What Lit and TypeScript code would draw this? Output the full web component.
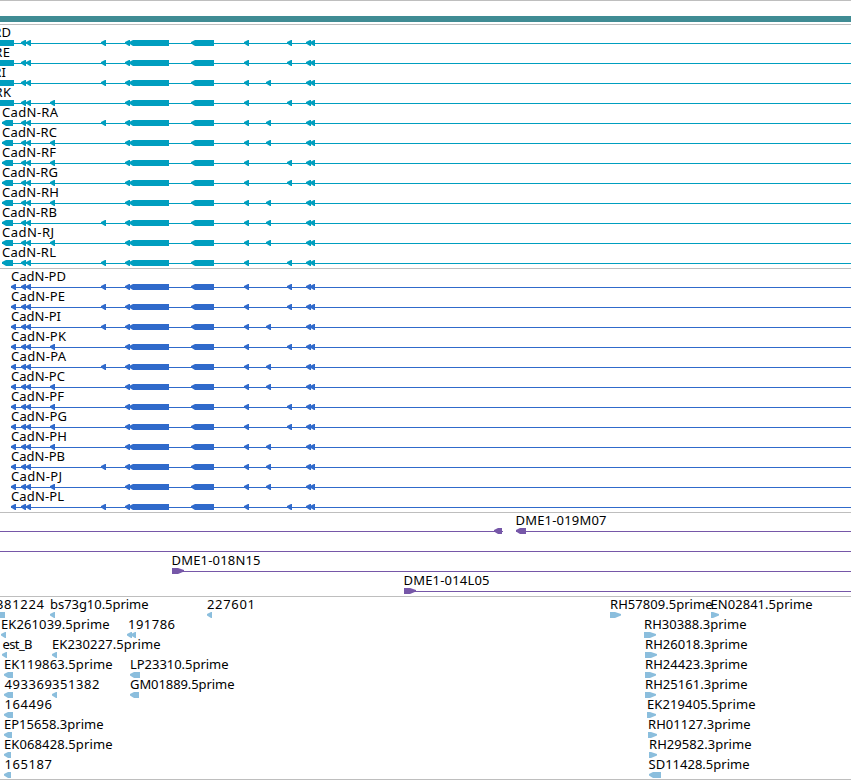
// import stuff
import { LitElement, html, svg, css } from 'lit';
import { customElement, property } from 'lit/decorators.js';

// text, start x, drawn length
type Label = [string, number, number];
// start x, end x, direction
type Part = [number, number, string];
// start x, end x
type Line = [number, number];

interface Row {
  labels: Label[];
  parts: Part[];
  lines: Line[];
}

const EDGE = 851;

const left = (a: number, b: number): Part => [a, b, 'left'];
const right = (a: number, b: number): Part => [a, b, 'right'];

// exons shared by every CadN isoform, the flags pick the alternative ones
function exons(first: Part, alt: number, last: number): Part[] {
  return [
    first,
    left(21, 26),
    left(26, 31),
    left(alt, alt + 5),
    left(125, 130),
    left(129, 169),
    left(191, 214),
    left(244, 249),
    left(last, last + 5),
    left(306, 311),
    left(310, 315),
  ];
}

// isoform letter, alternative exons, label lengths for transcript and protein
const isoforms: [string, number, number, number, number][] = [
  ['D', 101, 287, 56, 55],
  ['E', 101, 287, 55, 54],
  ['I', 101, 266, 51, 50],
  ['K', 50, 287, 56, 55],
  ['A', 101, 266, 56, 55],
  ['C', 50, 266, 55, 54],
  ['F', 50, 287, 54, 53],
  ['G', 50, 287, 56, 56],
  ['H', 50, 266, 57, 56],
  ['B', 101, 266, 55, 54],
  ['J', 50, 266, 52, 51],
  ['L', 101, 287, 54, 53],
];

const transcripts: Row[] = isoforms.map(([name, alt, last, width], i) => ({
  labels: [[`CadN-R${name}`, i < 4 ? -45.5 : 1.5, width]],
  parts: exons(i < 4 ? [0, 14, 'none'] : left(2, 13), alt, last),
  lines: [[i < 4 ? 0 : 2, EDGE]],
}));

const proteins: Row[] = isoforms.map(([name, alt, last, , width]) => ({
  labels: [[`CadN-P${name}`, 10.5, width]],
  parts: exons(left(11, 16), alt, last),
  lines: [[11, EDGE]],
}));

const clones: Row[] = [
  {
    labels: [['DME1-019M07', 515, 91]],
    parts: [left(494, 502), left(516, 526)],
    lines: [[0, 503], [516, EDGE]],
  },
  { labels: [], parts: [], lines: [[0, EDGE]] },
  { labels: [['DME1-018N15', 171, 89]], parts: [right(172, 184)], lines: [[172, EDGE]] },
  { labels: [['DME1-014L05', 403, 86]], parts: [right(404, 416)], lines: [[404, EDGE]] },
];

const est = (labels: Label[], parts: Part[]): Row => ({ labels, parts, lines: [] });

const ests: Row[] = [
  est(
    [['381224', -4.5, 48], ['bs73g10.5prime', 49.5, 98.5], ['227601', 206.5, 48], ['RH57809.5prime', 609.5, 102.5], ['EN02841.5prime', 710, 102]],
    [[0, 5, 'none'], left(50, 55), left(207, 212), right(610, 621), right(711, 719)],
  ),
  est(
    [['EK261039.5prime', 0.5, 108.5], ['191786', 127.5, 47], ['RH30388.3prime', 643.5, 102.5]],
    [left(1, 6), left(127, 132), left(131, 136), right(644, 656)],
  ),
  est(
    [['est_B', 2, 30], ['EK230227.5prime', 51.5, 108.5], ['RH26018.3prime', 644.5, 102.5]],
    [left(2, 7), left(52, 57), right(645, 657)],
  ),
  est(
    [['EK119863.5prime', 3.5, 108.5], ['LP23310.5prime', 129.5, 98.5], ['RH24423.3prime', 644.5, 102.5]],
    [left(4, 13), left(130, 140), right(645, 656)],
  ),
  est(
    [['493369', 4, 47.5], ['351382', 51.5, 47.5], ['GM01889.5prime', 129.5, 104.5], ['RH25161.3prime', 644.5, 102.5]],
    [left(4, 13), left(52, 57), left(130, 139), right(645, 656)],
  ),
  est(
    [['164496', 4, 47.5], ['EK219405.5prime', 646.5, 108.5]],
    [left(4, 13), right(647, 656)],
  ),
  est(
    [['EP15658.3prime', 3.5, 99.5], ['RH01127.3prime', 647.5, 102.5]],
    [left(4, 12), right(648, 657)],
  ),
  est(
    [['EK068428.5prime', 3.5, 108.5], ['RH29582.3prime', 648.5, 102.5]],
    [left(4, 11), right(649, 657)],
  ),
  est(
    [['165187', 4, 47.5], ['SD11428.5prime', 648, 101]],
    [left(4, 11), left(649, 661)],
  ),
];

@customElement('map-row')
export class MapRow extends LitElement {
  @property({ attribute: false }) row: Row = { labels: [], parts: [], lines: [] };

  static styles = css`
    :host {
      display: block;
      height: 20px;
    }

    svg {
      display: block;
      width: 851px;
      height: 20px;
      overflow: visible;
    }

    text {
      font: 13px 'Noto Sans', 'Open Sans', sans-serif;
      fill: #000;
    }

    .shape {
      fill: currentColor;
    }
  `;

  // a block six pixels high, pointed at the side it runs to
  points([a, b, dir]: Part) {
    if (dir === 'left') {
      return `${a},15 ${a + 4},13 ${b},13 ${b},19 ${a + 4},19 ${a},16.6`;
    }
    if (dir === 'right') {
      return `${a},13 ${b - 6},13 ${b},15 ${b},16.6 ${b - 6},19 ${a},19`;
    }
    return `${a},13 ${b},13 ${b},19 ${a},19`;
  }

  render() {
    const { labels, parts, lines } = this.row;
    return html`
      <svg viewBox="0 0 851 20">
        ${lines.map(([a, b]) => svg`<rect class="shape" x=${a} y="16" width=${b - a} height="1"></rect>`)}
        ${parts.map((part) => svg`<polygon class="shape" points=${this.points(part)}></polygon>`)}
        ${labels.map(([text, x, width]) => svg`<text x=${x + 0.5} y="10" textLength=${width}>${text}</text>`)}
      </svg>
    `;
  }
}

@customElement('app-root')
export class AppRoot extends LitElement {
  static styles = css`
    :host {
      display: block;
      width: 851px;
      height: 780px;
      overflow: hidden;
      background: #fff;
    }

    .contig {
      height: 25px;
      box-sizing: border-box;
      padding-top: 15px;
      border-top: 1px solid #bebebe;
      border-bottom: 1px solid #bebebe;
    }

    .bar {
      height: 6px;
      background: #408c94;
    }

    .track {
      padding: 2px 0 1px;
      border-bottom: 1px solid #bebebe;
    }

    .transcripts {
      color: #009ebf;
    }

    .proteins {
      color: #306acb;
    }

    .clones {
      color: #7657a8;
    }

    .ests {
      color: #8bbedd;
      padding-bottom: 0;
    }
  `;

  track(name: string, rows: Row[]) {
    return html`
      <section class="track ${name}">
        ${rows.map((row) => html`<map-row .row=${row}></map-row>`)}
      </section>
    `;
  }

  render() {
    return html`
      <div class="contig"><div class="bar"></div></div>
      ${this.track('transcripts', transcripts)}
      ${this.track('proteins', proteins)}
      ${this.track('clones', clones)}
      ${this.track('ests', ests)}
    `;
  }
}
